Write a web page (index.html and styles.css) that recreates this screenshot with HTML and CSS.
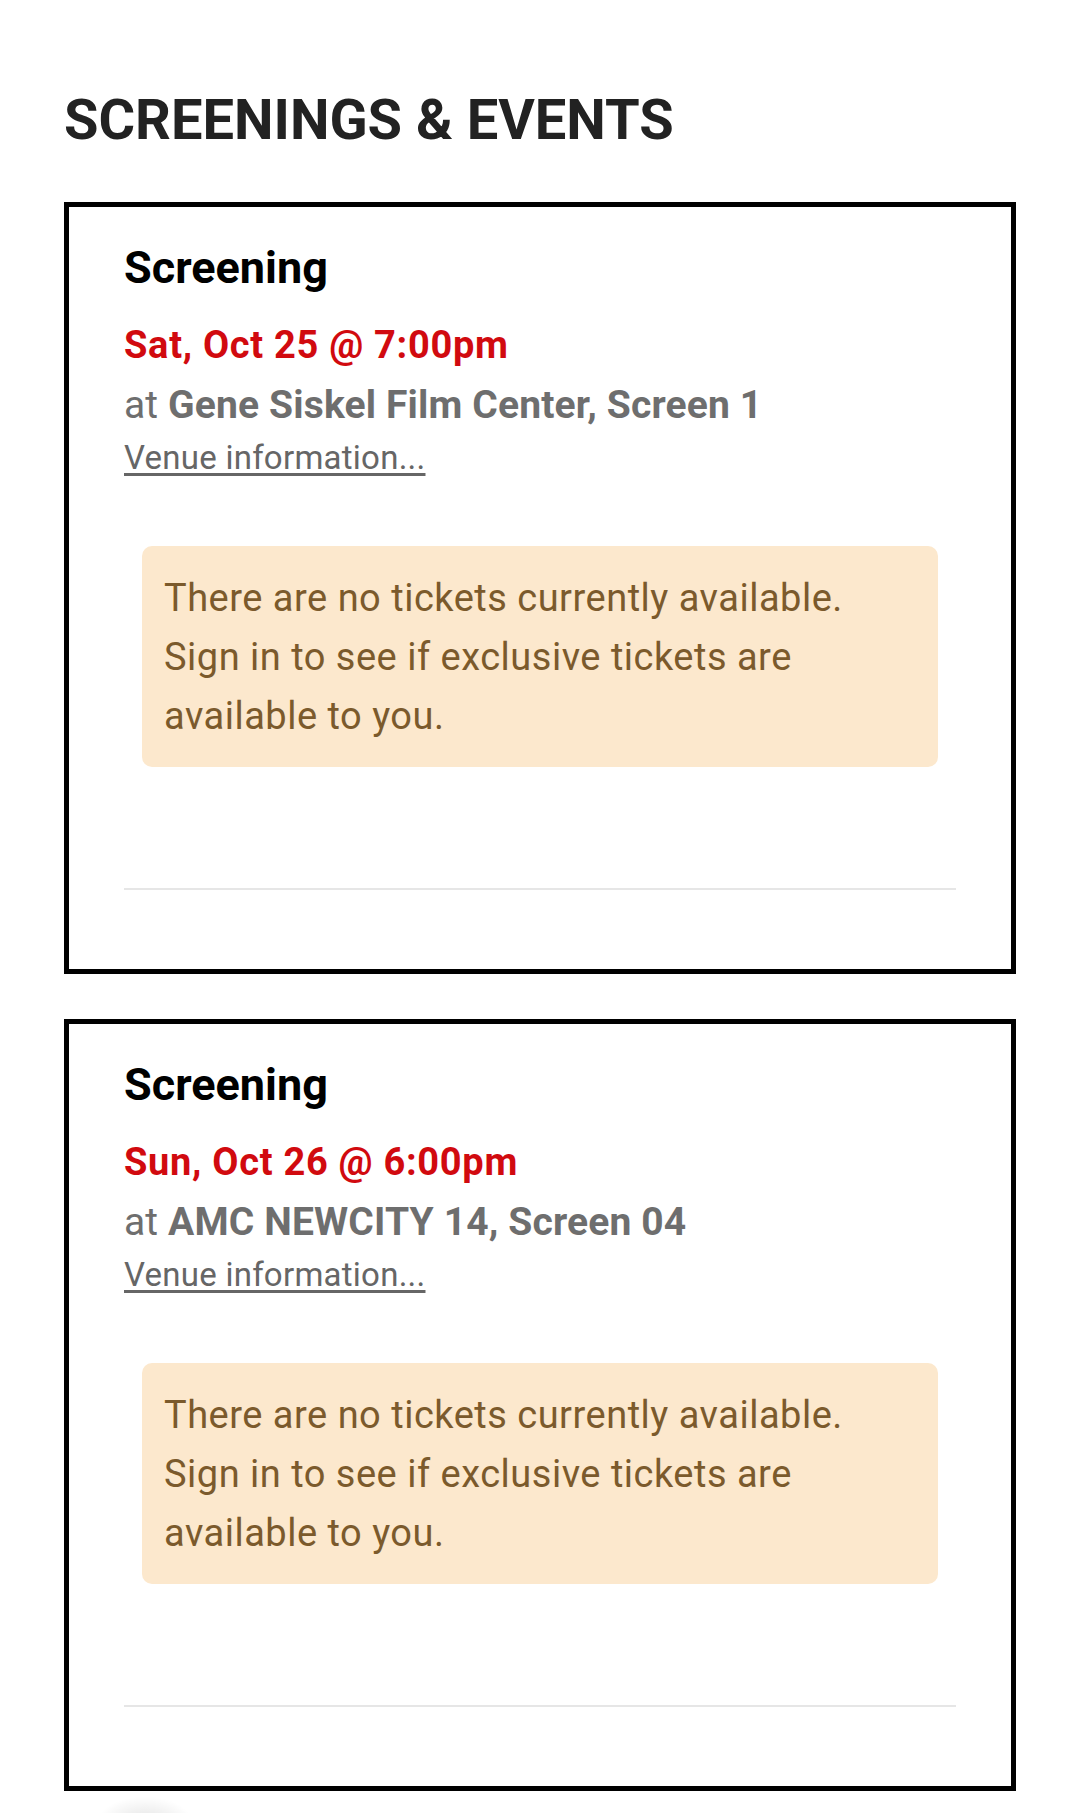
FILE: index.html
```html
<!DOCTYPE html>
<html lang="en">
<head>
    <meta charset="UTF-8">
    <meta name="viewport" content="width=device-width, initial-scale=1.0">
    <title>Screenings &amp; Events</title>
    <link rel="stylesheet" href="styles.css">
</head>
<body>
    <main class="events">
        <h2 class="events-title">SCREENINGS &amp; EVENTS</h2>

        <div class="event-card">
            <div class="event-type">Screening</div>
            <div class="event-date">Sat, Oct 25 @ 7:00pm</div>
            <div class="event-venue">at <strong>Gene Siskel Film Center, Screen 1</strong></div>
            <a class="venue-link" href="#">Venue information...</a>
            <div class="notice">
                There are no tickets currently available. Sign in to see if exclusive tickets are available to you.
            </div>
            <hr class="event-divider">
        </div>

        <div class="event-card">
            <div class="event-type">Screening</div>
            <div class="event-date">Sun, Oct 26 @ 6:00pm</div>
            <div class="event-venue">at <strong>AMC NEWCITY 14, Screen 04</strong></div>
            <a class="venue-link" href="#">Venue information...</a>
            <div class="notice">
                There are no tickets currently available. Sign in to see if exclusive tickets are available to you.
            </div>
            <hr class="event-divider">
        </div>
    </main>

    <div class="fab-shadow"></div>
</body>
</html>
```

FILE: styles.css
```css
body {
    font-family: Roboto, 'Liberation Sans', Arial, sans-serif;
    background: #fff;
    margin: 0;
    padding: 0;
    color: #222;
}

.events {
    padding: 87px 64px 22px;
}

.events-title {
    font-size: 56px;
    font-weight: 700;
    color: #222;
    margin: 0 0 48px;
    line-height: 67px;
}

.event-card {
    border: 5px solid #000;
    padding: 35px 55px 79px;
    margin-bottom: 45px;
}

.event-card:last-child {
    margin-bottom: 0;
}

.event-type {
    font-size: 45px;
    font-weight: 700;
    line-height: 52px;
    color: #000;
}

.event-date {
    font-size: 38px;
    font-weight: 700;
    line-height: 44px;
    letter-spacing: 0.7px;
    color: #d10a0f;
    margin-top: 29px;
}

.event-venue {
    font-size: 39px;
    line-height: 44px;
    letter-spacing: 0.15px;
    color: #6e6e6e;
    margin-top: 16px;
}

.event-venue strong {
    font-weight: 700;
}

.venue-link {
    display: inline-block;
    font-size: 33px;
    line-height: 40px;
    letter-spacing: 0.25px;
    color: #666;
    text-decoration: underline;
    text-underline-offset: 4px;
    margin-top: 11px;
}

.notice {
    background: #fce8cd;
    color: #7b5a2c;
    border-radius: 10px;
    margin: 68px 18px 0;
    padding: 23px 24px 21px 22px;
    font-size: 38px;
    line-height: 59px;
    letter-spacing: 0.5px;
}

.event-divider {
    border: none;
    height: 2px;
    background: #e6e6e6;
    margin: 121px 0 0;
}

.fab-shadow {
    position: absolute;
    left: 95px;
    top: 1796px;
    width: 100px;
    height: 60px;
    border-radius: 50%;
    background: radial-gradient(ellipse at center, rgba(0,0,0,0.12) 0%, rgba(0,0,0,0) 70%);
}
```
